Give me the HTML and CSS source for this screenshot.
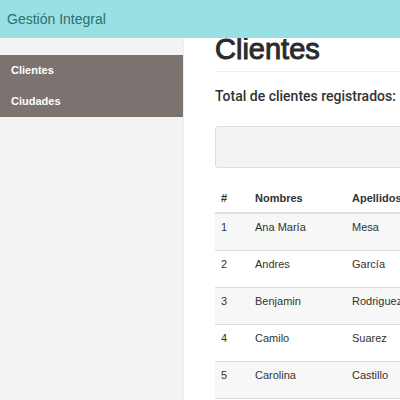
FILE: index.html
```html
<!DOCTYPE html>
<html lang="es">
<head>
<meta charset="utf-8">
<title>Gestión Integral</title>
<link rel="stylesheet" href="styles.css">
</head>
<body>
<header class="navbar"><a class="brand" href="#">Gestión Integral</a></header>
<div class="layout">
  <nav class="sidebar">
    <ul class="menu">
      <li><a href="#">Clientes</a></li>
      <li><a href="#">Ciudades</a></li>
    </ul>
  </nav>
  <main class="content">
    <h1 class="title">Clientes</h1>
    <h2 class="total">Total de clientes registrados:</h2>
    <div class="well"></div>
    <table class="table">
      <thead>
        <tr><th class="col-id">#</th><th class="col-name">Nombres</th><th>Apellidos</th></tr>
      </thead>
      <tbody>
        <tr><td>1</td><td>Ana María</td><td>Mesa</td></tr>
        <tr><td>2</td><td>Andres</td><td>García</td></tr>
        <tr><td>3</td><td>Benjamin</td><td>Rodriguez</td></tr>
        <tr><td>4</td><td>Camilo</td><td>Suarez</td></tr>
        <tr><td>5</td><td>Carolina</td><td>Castillo</td></tr>
      </tbody>
    </table>
  </main>
</div>
</body>
</html>
```
FILE: styles.css
```css
* { box-sizing: border-box; }

body {
  margin: 0;
  overflow: hidden;
  background: #fff;
  color: #333;
  font-family: "Liberation Sans", Arial, sans-serif;
  font-size: 11px;
  line-height: 16px;
}

a { text-decoration: none; }

.navbar {
  position: relative;
  z-index: 1;
  display: flex;
  align-items: center;
  height: 38px;
  padding: 0 7px;
  background: #98e0e3;
}

.brand {
  color: #2d706c;
  font-size: 14px;
  line-height: 18px;
}

.layout { display: flex; min-height: calc(100vh - 38px); }

.sidebar {
  flex: 0 0 184px;
  padding-top: 17px;
  border-right: 1px solid #eee;
  background: #f3f3f3;
}

.menu { margin: 0; padding: 0; list-style: none; background: #7c7371; }

.menu a {
  display: block;
  padding: 7px 11px 8px;
  color: #fff;
  font-weight: bold;
}

.content { flex: 1 0 320px; padding: 0 31px; }

.title {
  margin: -5px 0 16px;
  padding-bottom: 5px;
  border-bottom: 1px solid #eee;
  color: #2b2b2b;
  font-size: 29px;
  font-weight: normal;
  line-height: 33px;
  -webkit-text-stroke: 1px #2b2b2b;
}

.total {
  margin: 0 0 22px;
  font-family: Roboto, "Liberation Sans", sans-serif;
  font-size: 14px;
  font-weight: 500;
  line-height: 16px;
  white-space: nowrap;
}

.well {
  height: 42px;
  margin-bottom: 15px;
  border: 1px solid #ddd;
  border-radius: 3px;
  background: #f3f3f3;
}

.table {
  width: 100%;
  border-collapse: collapse;
  line-height: 14px;
  text-align: left;
}

.table th { height: 30px; padding: 6px; border-bottom: 2px solid #ddd; }

.table td {
  height: 37px;
  padding: 6px;
  border-top: 1px solid #ddd;
  vertical-align: top;
}

.table tbody tr:nth-child(odd) { background: #f7f7f7; }
.table tbody tr:last-child td { border-bottom: 1px solid #ddd; }

.col-id { width: 34px; }
.col-name { width: 97px; }
```
